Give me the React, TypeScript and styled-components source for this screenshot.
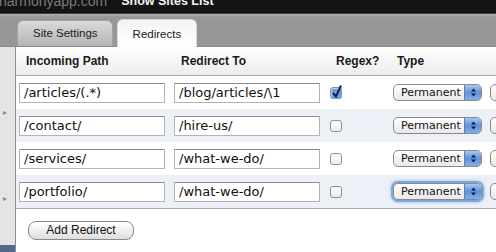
import React from "react";
import styled, { createGlobalStyle } from "styled-components";

const GlobalStyle = createGlobalStyle`
  html, body { margin: 0; padding: 0; background: #fff; }
  body { font-family: "Lucida Grande", "DejaVu Sans", sans-serif; }
`;

const uiFont = `"Lucida Grande", "Liberation Sans", Arial, sans-serif`;

const Page = styled.div`
  width: 496px;
  height: 252px;
  overflow: hidden;
  display: flex;
  flex-direction: column;
`;

const TopBar = styled.div`
  height: 13px;
  flex-shrink: 0;
  background: #141414;
  border-bottom: 1px solid #3c3c3c;
  display: flex;
  align-items: flex-end;
  gap: 14px;
  overflow: hidden;
`;

const TopText = styled.span<{ $strong?: boolean }>`
  font-family: ${uiFont};
  font-size: ${p => (p.$strong ? "12.5px" : "14px")};
  line-height: 14px;
  margin-bottom: 5px;
  color: ${p => (p.$strong ? "#f2f2f2" : "#7a7a7a")};
  font-weight: ${p => (p.$strong ? "bold" : "normal")};
  white-space: nowrap;
  margin-left: ${p => (p.$strong ? "0" : "-1px")};
`;

const TabStrip = styled.div`
  height: 32px;
  flex-shrink: 0;
  background: linear-gradient(#b4b4b4, #979797 3px, #979797);
  display: flex;
  align-items: flex-end;
  gap: 4px;
  padding-left: 17px;
  border-bottom: 1px solid #8a8a8a;
`;

const Tab = styled.div<{ $active?: boolean }>`
  height: ${p => (p.$active ? "28px" : "26px")};
  box-sizing: border-box;
  padding: 0 ${p => (p.$active ? "15px" : "14px")} 0 15px;
  border: 1px solid ${p => (p.$active ? "#d8d8d8" : "#a2a2a2")};
  border-bottom: none;
  border-radius: 6px 6px 0 0;
  background: ${p =>
    p.$active
      ? "linear-gradient(#f4f4f4, #ffffff)"
      : "linear-gradient(#dadada, #b4b4b4)"};
  font-family: ${uiFont};
  font-size: 11.5px;
  line-height: ${p => (p.$active ? "28px" : "25px")};
  color: #1a1a1a;
  margin-bottom: ${p => (p.$active ? "-1px" : "0")};
`;

const Body = styled.div`
  flex: 1;
  display: flex;
  min-height: 0;
`;

const Sidebar = styled.div`
  width: 15px;
  flex-shrink: 0;
  border-right: 1px solid #8d8d8d;
  background: #e4e4e4;
  display: flex;
  flex-direction: column;
`;

const SideArrow = styled.div<{ $top: number }>`
  margin-top: ${p => p.$top}px;
  margin-left: 3px;
  width: 0;
  height: 0;
  border-top: 2.5px solid transparent;
  border-bottom: 2.5px solid transparent;
  border-left: 4px solid #8a8a8a;
`;

const SideSelected = styled.div`
  margin-top: auto;
  height: 7px;
  background: #56678b;
`;

const Panel = styled.div`
  flex: 1;
  min-width: 0;
  overflow: hidden;
  background: #fff;
  display: flex;
  flex-direction: column;
`;

const Grid = styled.div`
  display: grid;
  grid-template-columns: 3px 146px 9px 146px 10px 12px 51px 89px 1fr;
`;

const HeadCell = styled.div<{ $col: number; $indent: number }>`
  grid-column: ${p => p.$col};
  grid-row: 1;
  height: 28px;
  padding-left: ${p => p.$indent}px;
  font-family: ${uiFont};
  font-weight: bold;
  font-size: 12px;
  line-height: 28px;
  color: #1a1a1a;
  white-space: nowrap;
`;

const HeadBar = styled.div`
  grid-column: 1 / -1;
  grid-row: 1;
  height: 28px;
  background: linear-gradient(#ffffff, #ececec);
  border-bottom: 1px solid #a8a8a8;
`;

const Row = styled.div<{ $alt?: boolean }>`
  grid-column: 1 / -1;
  display: grid;
  grid-template-columns: subgrid;
  align-items: center;
  height: 33px;
  background: ${p => (p.$alt ? "#edf1f7" : "#ffffff")};
`;

const Input = styled.div<{ $col: number }>`
  grid-column: ${p => p.$col};
  height: 20px;
  box-sizing: border-box;
  border: 1px solid #b4b4b4;
  border-top-color: #8c8c8c;
  background: #fff;
  font-size: 13px;
  line-height: 18px;
  padding-left: 4px;
  color: #111;
  white-space: nowrap;
  overflow: hidden;
`;

const Check = styled.div`
  grid-column: 6;
  width: 12px;
  height: 12px;
  box-sizing: border-box;
  border: 1px solid #8e8e8e;
  border-radius: 3px;
  background: linear-gradient(#ffffff, #ececec);
  position: relative;
`;

const CheckMark = styled.svg`
  position: absolute;
  left: -1px;
  top: -4px;
`;

const Select = styled.div<{ $focus?: boolean }>`
  grid-column: 8;
  height: 17px;
  box-sizing: border-box;
  border: 1px solid #8a8a8a;
  border-radius: 5px;
  background: linear-gradient(#ffffff, #e9e9e9);
  display: flex;
  overflow: hidden;
  box-shadow: ${p => (p.$focus ? "0 0 0 2px #7ea7dc, 0 0 3px 3px #b8cfee" : "none")};
`;

const SelectText = styled.div`
  flex: 1;
  font-size: 11px;
  line-height: 15px;
  padding-left: 7px;
  color: #111;
`;

const SelectArrows = styled.div`
  width: 16px;
  background: linear-gradient(#a9c8f0, #5f93da 50%, #82aee8);
  border-left: 1px solid #5d7fb3;
  display: flex;
  align-items: center;
  justify-content: center;
`;

const CutButton = styled.div`
  grid-column: 9;
  height: 17px;
  margin-left: 8px;
  width: 20px;
  box-sizing: border-box;
  border: 1px solid #8a8a8a;
  border-radius: 5px;
  background: linear-gradient(#ffffff, #e9e9e9);
`;

const Footer = styled.div`
  border-top: 1px solid #a8a8a8;
  padding: 12px 0 0 12px;
`;

const Button = styled.div`
  width: 106px;
  height: 19px;
  box-sizing: border-box;
  border: 1px solid #8a8a8a;
  border-radius: 8px;
  background: linear-gradient(#ffffff, #ececec 60%, #dedede);
  font-family: ${uiFont};
  font-size: 12px;
  line-height: 17px;
  text-align: center;
  color: #111;
`;

const redirects = [
  { from: "/articles/(.*)", to: "/blog/articles/\\1", regex: true },
  { from: "/contact/", to: "/hire-us/", regex: false },
  { from: "/services/", to: "/what-we-do/", regex: false },
  { from: "/portfolio/", to: "/what-we-do/", regex: false, focus: true },
];

const Arrows = () => (
  <svg width="7" height="9" viewBox="0 0 7 9">
    <path d="M3.5 0.5 L6 3.5 H1 Z" fill="#0e1d3a" />
    <path d="M3.5 8.5 L6 5.5 H1 Z" fill="#0e1d3a" />
  </svg>
);

export default function App() {
  return (
    <Page>
      <GlobalStyle />
      <TopBar>
        <TopText>harmonyapp.com</TopText>
        <TopText $strong>Show Sites List</TopText>
      </TopBar>
      <TabStrip>
        <Tab>Site Settings</Tab>
        <Tab $active>Redirects</Tab>
      </TabStrip>
      <Body>
        <Sidebar>
          <SideArrow $top={64} />
          <SideArrow $top={82} />
          <SideSelected />
        </Sidebar>
        <Panel>
          <Grid>
            <HeadBar />
            <HeadCell $col={2} $indent={7}>Incoming Path</HeadCell>
            <HeadCell $col={4} $indent={7}>Redirect To</HeadCell>
            <HeadCell $col={6} $indent={6}>Regex?</HeadCell>
            <HeadCell $col={8} $indent={4}>Type</HeadCell>
            {redirects.map((r, i) => (
              <Row key={r.from} $alt={i % 2 === 1}>
                <Input $col={2}>{r.from}</Input>
                <Input $col={4}>{r.to}</Input>
                <Check>
                  {r.regex && (
                    <CheckMark width="13" height="15" viewBox="0 0 13 15">
                      <rect x="1.5" y="4.5" width="10" height="10" rx="1" fill="#6d9ee0" />
                      <path d="M3 9 L6 12.5 L11 1.5" stroke="#10245a" strokeWidth="2" fill="none" />
                    </CheckMark>
                  )}
                </Check>
                <Select $focus={r.focus}>
                  <SelectText>Permanent</SelectText>
                  <SelectArrows>
                    <Arrows />
                  </SelectArrows>
                </Select>
                <CutButton />
              </Row>
            ))}
          </Grid>
          <Footer>
            <Button>Add Redirect</Button>
          </Footer>
        </Panel>
      </Body>
    </Page>
  );
}
